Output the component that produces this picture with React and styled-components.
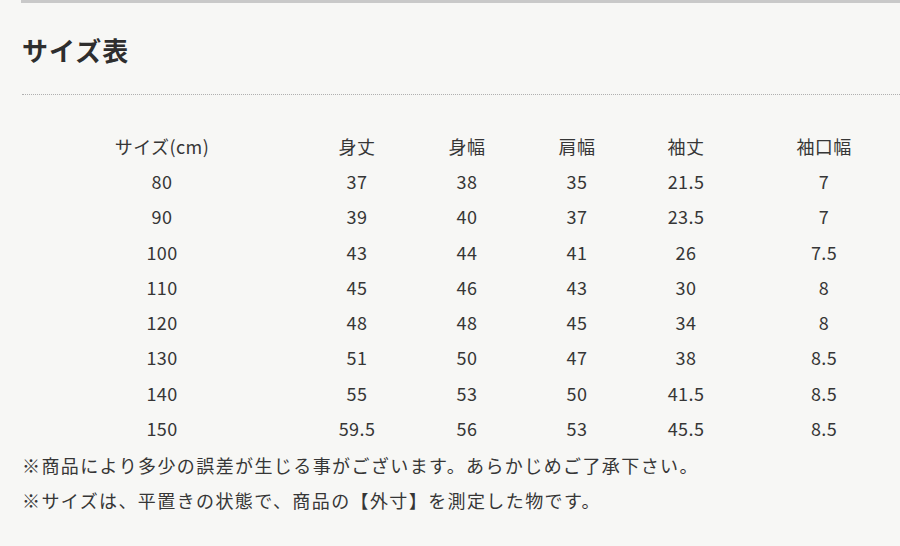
import React from "react";
import styled, { createGlobalStyle } from "styled-components";

const headers = ["サイズ(cm)", "身丈", "身幅", "肩幅", "袖丈", "袖口幅"];
const colWidths = [280, 110, 110, 110, 108, 168];

const rows = [
  ["80", "37", "38", "35", "21.5", "7"],
  ["90", "39", "40", "37", "23.5", "7"],
  ["100", "43", "44", "41", "26", "7.5"],
  ["110", "45", "46", "43", "30", "8"],
  ["120", "48", "48", "45", "34", "8"],
  ["130", "51", "50", "47", "38", "8.5"],
  ["140", "55", "53", "50", "41.5", "8.5"],
  ["150", "59.5", "56", "53", "45.5", "8.5"],
];

const notes = [
  "※商品により多少の誤差が生じる事がございます。あらかじめご了承下さい。",
  "※サイズは、平置きの状態で、商品の【外寸】を測定した物です。",
];

export default function App() {
  return (
    <>
      <GlobalStyle />
      <Page>
        <TopBar />
        <Title>サイズ表</Title>
        <Divider />
        <SizeTable>
          <colgroup>
            {colWidths.map((w, i) => (
              <col key={i} style={{ width: w }} />
            ))}
          </colgroup>
          <thead>
            <tr>
              {headers.map((h) => (
                <Cell as="th" key={h}>
                  {h}
                </Cell>
              ))}
            </tr>
          </thead>
          <tbody>
            {rows.map((r) => (
              <tr key={r[0]}>
                {r.map((v, i) => (
                  <Cell key={i}>{v}</Cell>
                ))}
              </tr>
            ))}
          </tbody>
        </SizeTable>
        <Notes>
          {notes.map((n) => (
            <Note key={n}>{n}</Note>
          ))}
        </Notes>
      </Page>
    </>
  );
}

const GlobalStyle = createGlobalStyle`
  html, body {
    margin: 0;
    padding: 0;
    background: #f7f7f5;
    overflow: hidden;
  }
  body {
    font-family: "Noto Sans CJK JP", "Noto Sans", sans-serif;
    color: #333;
  }
`;

const Page = styled.div`
  width: 900px;
  height: 546px;
  overflow: hidden;
  padding-left: 22px;
  box-sizing: border-box;
`;

const TopBar = styled.div`
  height: 3px;
  margin-left: -1px;
  background: #c9c9c9;
`;

const Title = styled.h2`
  margin: 27px 0 0;
  font-size: 26px;
  line-height: 39px;
  font-weight: 700;
  letter-spacing: 1px;
  color: #2e2e2e;
`;

const Divider = styled.div`
  margin-top: 25px;
  margin-right: -22px;
  border-top: 1px dotted #b0b0b0;
`;

const SizeTable = styled.table`
  margin-top: 33px;
  border-collapse: collapse;
  table-layout: fixed;
  width: 886px;
`;

const Cell = styled.td`
  height: 35.3px;
  padding: 0;
  text-align: center;
  font-size: 18px;
  font-weight: 400;
  letter-spacing: 0.4px;
  color: #363636;
  white-space: nowrap;
`;

const Notes = styled.div`
  display: flex;
  flex-direction: column;
  padding-top: 2px;
`;

const Note = styled.p`
  margin: 0;
  font-size: 18px;
  line-height: 35px;
  letter-spacing: 1.4px;
  color: #363636;
  white-space: nowrap;
`;
